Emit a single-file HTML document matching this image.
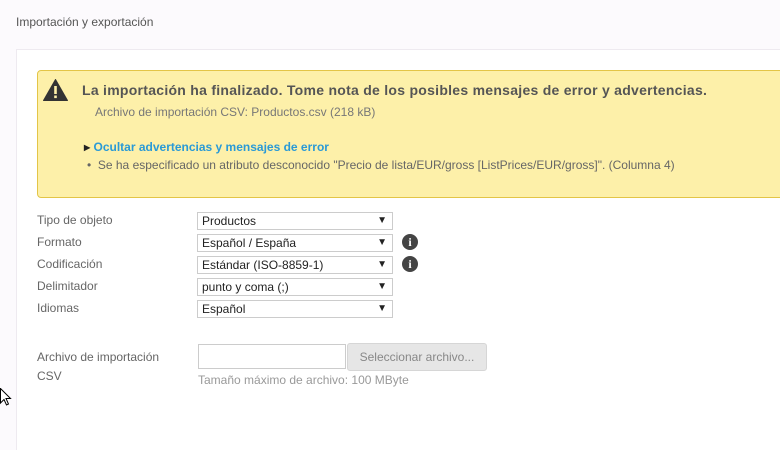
<!DOCTYPE html>
<html><head><meta charset="utf-8"><style>
body{margin:0;width:780px;height:415px;overflow:hidden;background:#fcfafd;font-family:"Liberation Sans",Arial,sans-serif;position:relative;color:#555}
.abs{position:absolute;white-space:nowrap}
.panel{position:absolute;left:16px;top:49px;width:800px;height:400px;background:#fff;border-top:1px solid #eeeaf0;border-left:1px solid #eeeaf0}
.alert{position:absolute;left:37px;top:70px;width:760px;height:126px;background:#fdf0a9;border:1px solid #e3c547;border-radius:4px}
.lbl{position:absolute;left:37px;font-size:12px;color:#666}
.sel{position:absolute;left:197px;width:194px;height:16px;border:1px solid #ccc;background:#fff;font-size:12px;color:#222;line-height:16px;box-sizing:content-box}
.sel span{position:absolute;left:4px;top:0}
.sel i{position:absolute;right:5px;top:0;font-style:normal;font-size:10px;color:#222}
.info{position:absolute;left:402px;width:16px;height:16px;border-radius:50%;background:#444;color:#fff;font:bold 12px/16px "Liberation Serif",serif;text-align:center}
</style></head><body>
<div class="abs" style="left:16px;top:15px;font-size:12px;color:#555">Importación y exportación</div>
<div class="panel"></div>
<div class="alert"></div>
<svg class="abs" style="left:43px;top:79px" width="25" height="22" viewBox="0 0 25 22"><path d="M12.5 0.5 L24.5 21.5 L0.5 21.5 Z" fill="#333" stroke="#333" stroke-linejoin="round"/><rect x="11.2" y="7" width="2.6" height="8" fill="#fdf0a9"/><rect x="11.2" y="16.5" width="2.6" height="2.6" fill="#fdf0a9"/></svg>
<div class="abs" style="left:82px;top:82px;font-size:14px;font-weight:bold;color:#555;letter-spacing:0.27px">La importación ha finalizado. Tome nota de los posibles mensajes de error y advertencias.</div>
<div class="abs" style="left:95px;top:105px;font-size:12px;color:#777">Archivo de importación CSV: Productos.csv (218 kB)</div>
<div class="abs" style="left:84px;top:140px;font-size:12px;font-weight:bold;color:#2a9ad6"><span style="color:#222;font-size:8px;vertical-align:1px">▶</span> Ocultar advertencias y mensajes de error</div>
<div class="abs" style="left:87px;top:158px;font-size:12px;color:#666">•&nbsp; Se ha especificado un atributo desconocido "Precio de lista/EUR/gross [ListPrices/EUR/gross]". (Columna 4)</div>

<div class="lbl" style="top:213px">Tipo de objeto</div>
<div class="lbl" style="top:235px">Formato</div>
<div class="lbl" style="top:257px">Codificación</div>
<div class="lbl" style="top:279px">Delimitador</div>
<div class="lbl" style="top:301px">Idiomas</div>
<div class="sel" style="top:212px"><span>Productos</span><i>▼</i></div>
<div class="sel" style="top:234px"><span>Español / España</span><i>▼</i></div>
<div class="sel" style="top:256px"><span>Estándar (ISO-8859-1)</span><i>▼</i></div>
<div class="sel" style="top:278px"><span>punto y coma (;)</span><i>▼</i></div>
<div class="sel" style="top:300px"><span>Español</span><i>▼</i></div>
<div class="info" style="top:234px">i</div>
<div class="info" style="top:256px">i</div>

<div class="lbl" style="top:348px;line-height:19px">Archivo de importación<br>CSV</div>
<div class="abs" style="left:198px;top:344px;width:146px;height:23px;border:1px solid #ccc;background:#fff"></div>
<div class="abs" style="left:347px;top:343px;width:138px;height:26px;border:1px solid #d6d6d6;border-radius:3px;background:#e6e6e6;color:#888;font-size:12px;line-height:26px;text-align:center">Seleccionar archivo...</div>
<div class="abs" style="left:198px;top:373px;font-size:12px;color:#999">Tamaño máximo de archivo: 100 MByte</div>
<svg class="abs" style="left:0;top:388px" width="12" height="20" viewBox="0 0 12 20"><path d="M0.5 0.5 L0.5 15 L4 11.5 L6.5 17 L8.5 16 L6 10.5 L10.5 10.5 Z" fill="#fff" stroke="#000"/></svg>
</body></html>
